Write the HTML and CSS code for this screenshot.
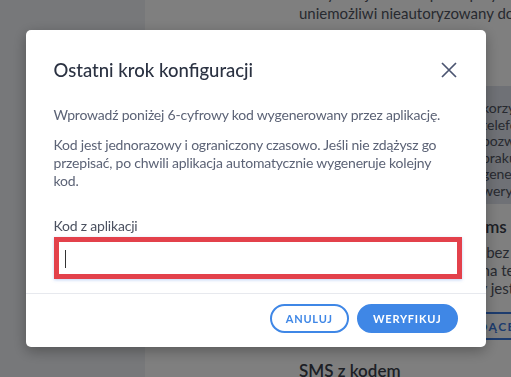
FILE: index.html
```html
<!DOCTYPE html>
<html lang="pl">

<head>
    <title>Ustawienia bezpieczeństwa</title>
    <meta name="viewport" content="width=device-width, initial-scale=1">
    <link rel="stylesheet" href="styles.css">
</head>

<body>
    <div class="page">
        <aside class="sidebar"></aside>

        <main class="main">
            <div class="content">
                <p class="lead">
                    Weryfikacja dwuetapowa przy każdym logowaniu zwiększa ochronę,<br>
                    uniemożliwi nieautoryzowany dostęp do Twojego konta.
                </p>

                <div class="info">
                    <div class="info-art"></div>
                    <p class="info-text">
                        korzystania z aplikacji<br>
                        telefonu komórkowego<br>
                        pozwala na logowanie<br>
                        braku dostępu do sieci<br>
                        generowania kodów<br>
                        weryfikacji konta
                    </p>
                </div>

                <div class="method">
                    <h3 class="method-title">Potwierdzenie z kodem sms</h3>
                    <p class="method-text">
                        To rozwiązanie działa nawet bez dostępu do internetu<br>
                        Nie wymaga instalacji softu na telefonie<br>
                        Kod przychodzi nawet, kiedy jesteś poza domem
                    </p>
                    <button class="btn-ghost" type="button">Ustaw jako wiodącej</button>
                </div>

                <h3 class="method-title">SMS z kodem</h3>
            </div>
        </main>
    </div>

    <div class="overlay">
        <div class="modal" role="dialog" aria-labelledby="modalTitle">
            <div class="modal-header">
                <h2 id="modalTitle">Ostatni krok konfiguracji</h2>
                <button class="close" type="button" aria-label="Zamknij">
                    <svg width="16" height="16" viewBox="0 0 16 16">
                        <path d="M1 1 L15 15 M15 1 L1 15" stroke="currentColor" stroke-width="1.7" fill="none" />
                    </svg>
                </button>
            </div>

            <div class="modal-body">
                <p>Wprowadź poniżej 6-cyfrowy kod wygenerowany przez aplikację.</p>
                <p>Kod jest jednorazowy i ograniczony czasowo. Jeśli nie zdążysz go przepisać, po chwili aplikacja
                    automatycznie wygeneruje kolejny kod.</p>

                <label class="field-label" for="codeInput">Kod z aplikacji</label>
                <div class="field-box">
                    <input type="text" id="codeInput" class="field-input" inputmode="numeric">
                    <span class="caret"></span>
                </div>
            </div>

            <div class="modal-footer">
                <button class="btn btn-outline" type="button">Anuluj</button>
                <button class="btn btn-primary" type="button">Weryfikuj</button>
            </div>
        </div>
    </div>
</body>

</html>
```

FILE: styles.css
```css
* {
    box-sizing: border-box;
    margin: 0;
    padding: 0;
}

body {
    font-family: Lato, 'Noto Sans', sans-serif;
    background: #fff;
    overflow: hidden;
}

.page {
    display: flex;
    height: 100vh;
}

.sidebar {
    width: 145px;
    flex-shrink: 0;
    background: #eef0f4;
}

.main {
    flex: 1;
    overflow: hidden;
    padding-left: 154px;
}

/* page is scrolled a little, first line sits above the fold */
.content {
    width: 440px;
    margin-top: -17px;
    color: #4f5461;
    font-size: 15px;
    line-height: 20px;
    white-space: nowrap;
}

.info {
    display: flex;
    margin-top: 63px;
    height: 118px;
    padding: 14px 0 8px;
    background: #dfe3ec;
}

.info-art {
    width: 183px;
    flex-shrink: 0;
}

.info-text {
    font-size: 14px;
    line-height: 16.5px;
}

.method {
    margin-top: 12px;
}

.method-title {
    font-size: 17px;
    font-weight: 600;
    line-height: 22px;
    color: #3a3f4b;
}

.method-text {
    margin-top: 5px;
    line-height: 18px;
}

.btn-ghost {
    margin-top: 15px;
    margin-left: 36px;
    height: 28px;
    padding: 0 30px 0 16px;
    border: 2px solid #3a78dc;
    border-radius: 3px;
    background: none;
    color: #3a78dc;
    font-family: inherit;
    font-size: 12px;
    font-weight: 700;
    letter-spacing: 1.5px;
    text-transform: uppercase;
}

.method + .method-title {
    margin-top: 20px;
}

/* modal */

.overlay {
    position: fixed;
    inset: 0;
    background: rgba(0, 0, 0, 0.5);
    display: flex;
    align-items: center;
    justify-content: center;
}

.modal {
    width: 460px;
    background: white;
    border-radius: 5px;
    box-shadow: 0 4px 14px rgba(0, 0, 0, 0.3);
}

.modal-header {
    display: flex;
    align-items: center;
    justify-content: space-between;
    padding: 28px 28px 0 28px;
}

.modal-header h2 {
    font-size: 18.5px;
    font-weight: 500;
    line-height: 24px;
    color: #2b3242;
}

.close {
    display: flex;
    border: none;
    background: none;
    color: #4b5571;
    margin-right: 1px;
}

.modal-body {
    padding: 24px 28px 14px 28px;
    font-size: 14px;
    line-height: 18px;
    letter-spacing: -0.2px;
    color: #5c6376;
}

.modal-body p + p {
    margin-top: 12px;
}

.field-label {
    display: block;
    margin-top: 27px;
    margin-bottom: 2px;
    color: #4b5160;
}

.field-box {
    position: relative;
    margin-right: -4px;
}

.field-input {
    display: block;
    width: 100%;
    height: 42px;
    border: 5px solid #e3414b;
    box-shadow: 0 1px 3px rgba(70, 130, 230, 0.35);
    outline: none;
    font-family: inherit;
    font-size: 15px;
}

.caret {
    position: absolute;
    left: 11px;
    top: 13px;
    width: 1px;
    height: 18px;
    background: #333;
}

.modal-footer {
    display: flex;
    justify-content: flex-end;
    gap: 8px;
    padding: 10px 28px 14px 28px;
    border-top: 1px solid #e7e9ee;
}

.btn {
    height: 29px;
    padding: 0 14px;
    border: 2px solid #3f87e6;
    border-radius: 15px;
    font-family: inherit;
    font-size: 11px;
    font-weight: 700;
    letter-spacing: 0.8px;
    text-transform: uppercase;
    cursor: pointer;
}

.btn-outline {
    background: white;
    color: #3f87e6;
}

.btn-primary {
    background: #3f87e6;
    color: white;
}
```
